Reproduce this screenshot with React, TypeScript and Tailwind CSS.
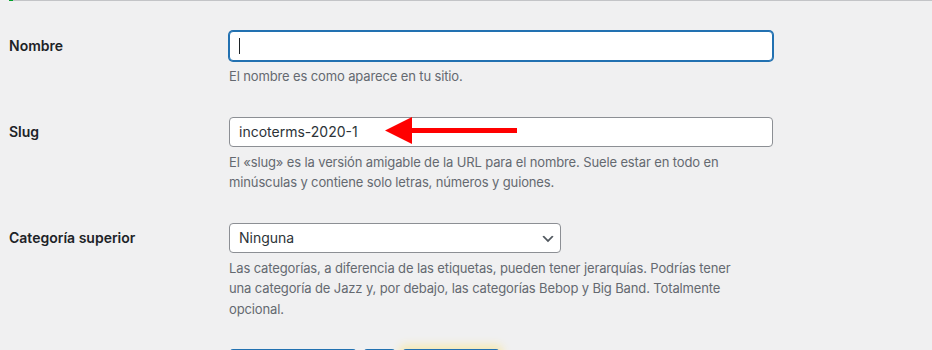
import React from "react";

const font = { fontFamily: "Inter, 'Liberation Sans', sans-serif" };

function Label({ children }: { children: React.ReactNode }) {
  return (
    <div className="w-[220px] shrink-0 pt-[5px] text-[14px] leading-[20px] font-semibold text-[#1d2327]">
      {children}
    </div>
  );
}

function Desc({ children }: { children: React.ReactNode }) {
  return (
    <p className="mt-[5px] whitespace-nowrap text-[13px] leading-[20.5px] tracking-[-0.13px] text-[#646970]">
      {children}
    </p>
  );
}

export default function App() {
  return (
    <div
      className="relative h-[350px] w-[932px] overflow-hidden bg-[#f0f0f1]"
      style={font}
    >
      <div className="ml-[9px] flex h-px bg-[#c3c4c7]">
        <div className="h-px w-[4px] bg-[#00a32a]" />
      </div>

      <div className="flex flex-col gap-[30px] pl-[9px] pt-[30px]">
        {/* Nombre */}
        <div className="flex">
          <Label>Nombre</Label>
          <div className="w-[544px]">
            <div className="flex h-[30px] items-center rounded-[4px] border border-[#2271b1] bg-white px-[9px] shadow-[0_0_0_1px_#2271b1]">
              <span className="h-[16px] w-px bg-[#1d2327]" />
            </div>
            <Desc>El nombre es como aparece en tu sitio.</Desc>
          </div>
        </div>

        {/* Slug */}
        <div className="flex">
          <Label>Slug</Label>
          <div className="w-[544px]">
            <div className="relative flex h-[30px] items-center rounded-[4px] border border-[#8c8f94] bg-white px-[9px] text-[14px] text-[#2c3338]">
              incoterms-2020-1
              <svg
                className="absolute left-[155px] top-[-1px]"
                width="132"
                height="28"
                viewBox="0 0 132 28"
              >
                <polygon points="0,13.5 27,0 27,27" fill="#ff0000" />
                <rect x="26" y="11" width="106" height="5" fill="#ff0000" />
              </svg>
            </div>
            <Desc>
              El «slug» es la versión amigable de la URL para el nombre. Suele estar en todo en
              <br />
              minúsculas y contiene solo letras, números y guiones.
            </Desc>
          </div>
        </div>

        {/* Categoría superior */}
        <div className="flex">
          <Label>Categoría superior</Label>
          <div className="w-[560px]">
            <div className="relative flex h-[30px] w-[332px] items-center rounded-[4px] border border-[#8c8f94] bg-white px-[9px] text-[14px] text-[#2c3338]">
              Ninguna
              <svg
                className="absolute right-[4px] top-[7px]"
                width="16"
                height="16"
                viewBox="0 0 20 20"
              >
                <path d="M5 6l5 5 5-5 2 1-7 7-7-7 2-1z" fill="#50575e" />
              </svg>
            </div>
            <Desc>
              Las categorías, a diferencia de las etiquetas, pueden tener jerarquías. Podrías tener
              <br />
              una categoría de Jazz y, por debajo, las categorías Bebop y Big Band. Totalmente
              <br />
              opcional.
            </Desc>
          </div>
        </div>

        {/* Buttons */}
        <div className="flex gap-[8px] pl-[221px]">
          <div className="h-[30px] w-[126px] rounded-[3px] bg-[#2271b1]" />
          <div className="h-[30px] w-[31px] rounded-[3px] bg-[#2271b1]" />
          <div className="h-[30px] w-[96px] rounded-[3px] bg-[#2271b1] shadow-[0_0_8px_4px_#f6e9b2]" />
        </div>
      </div>
    </div>
  );
}
